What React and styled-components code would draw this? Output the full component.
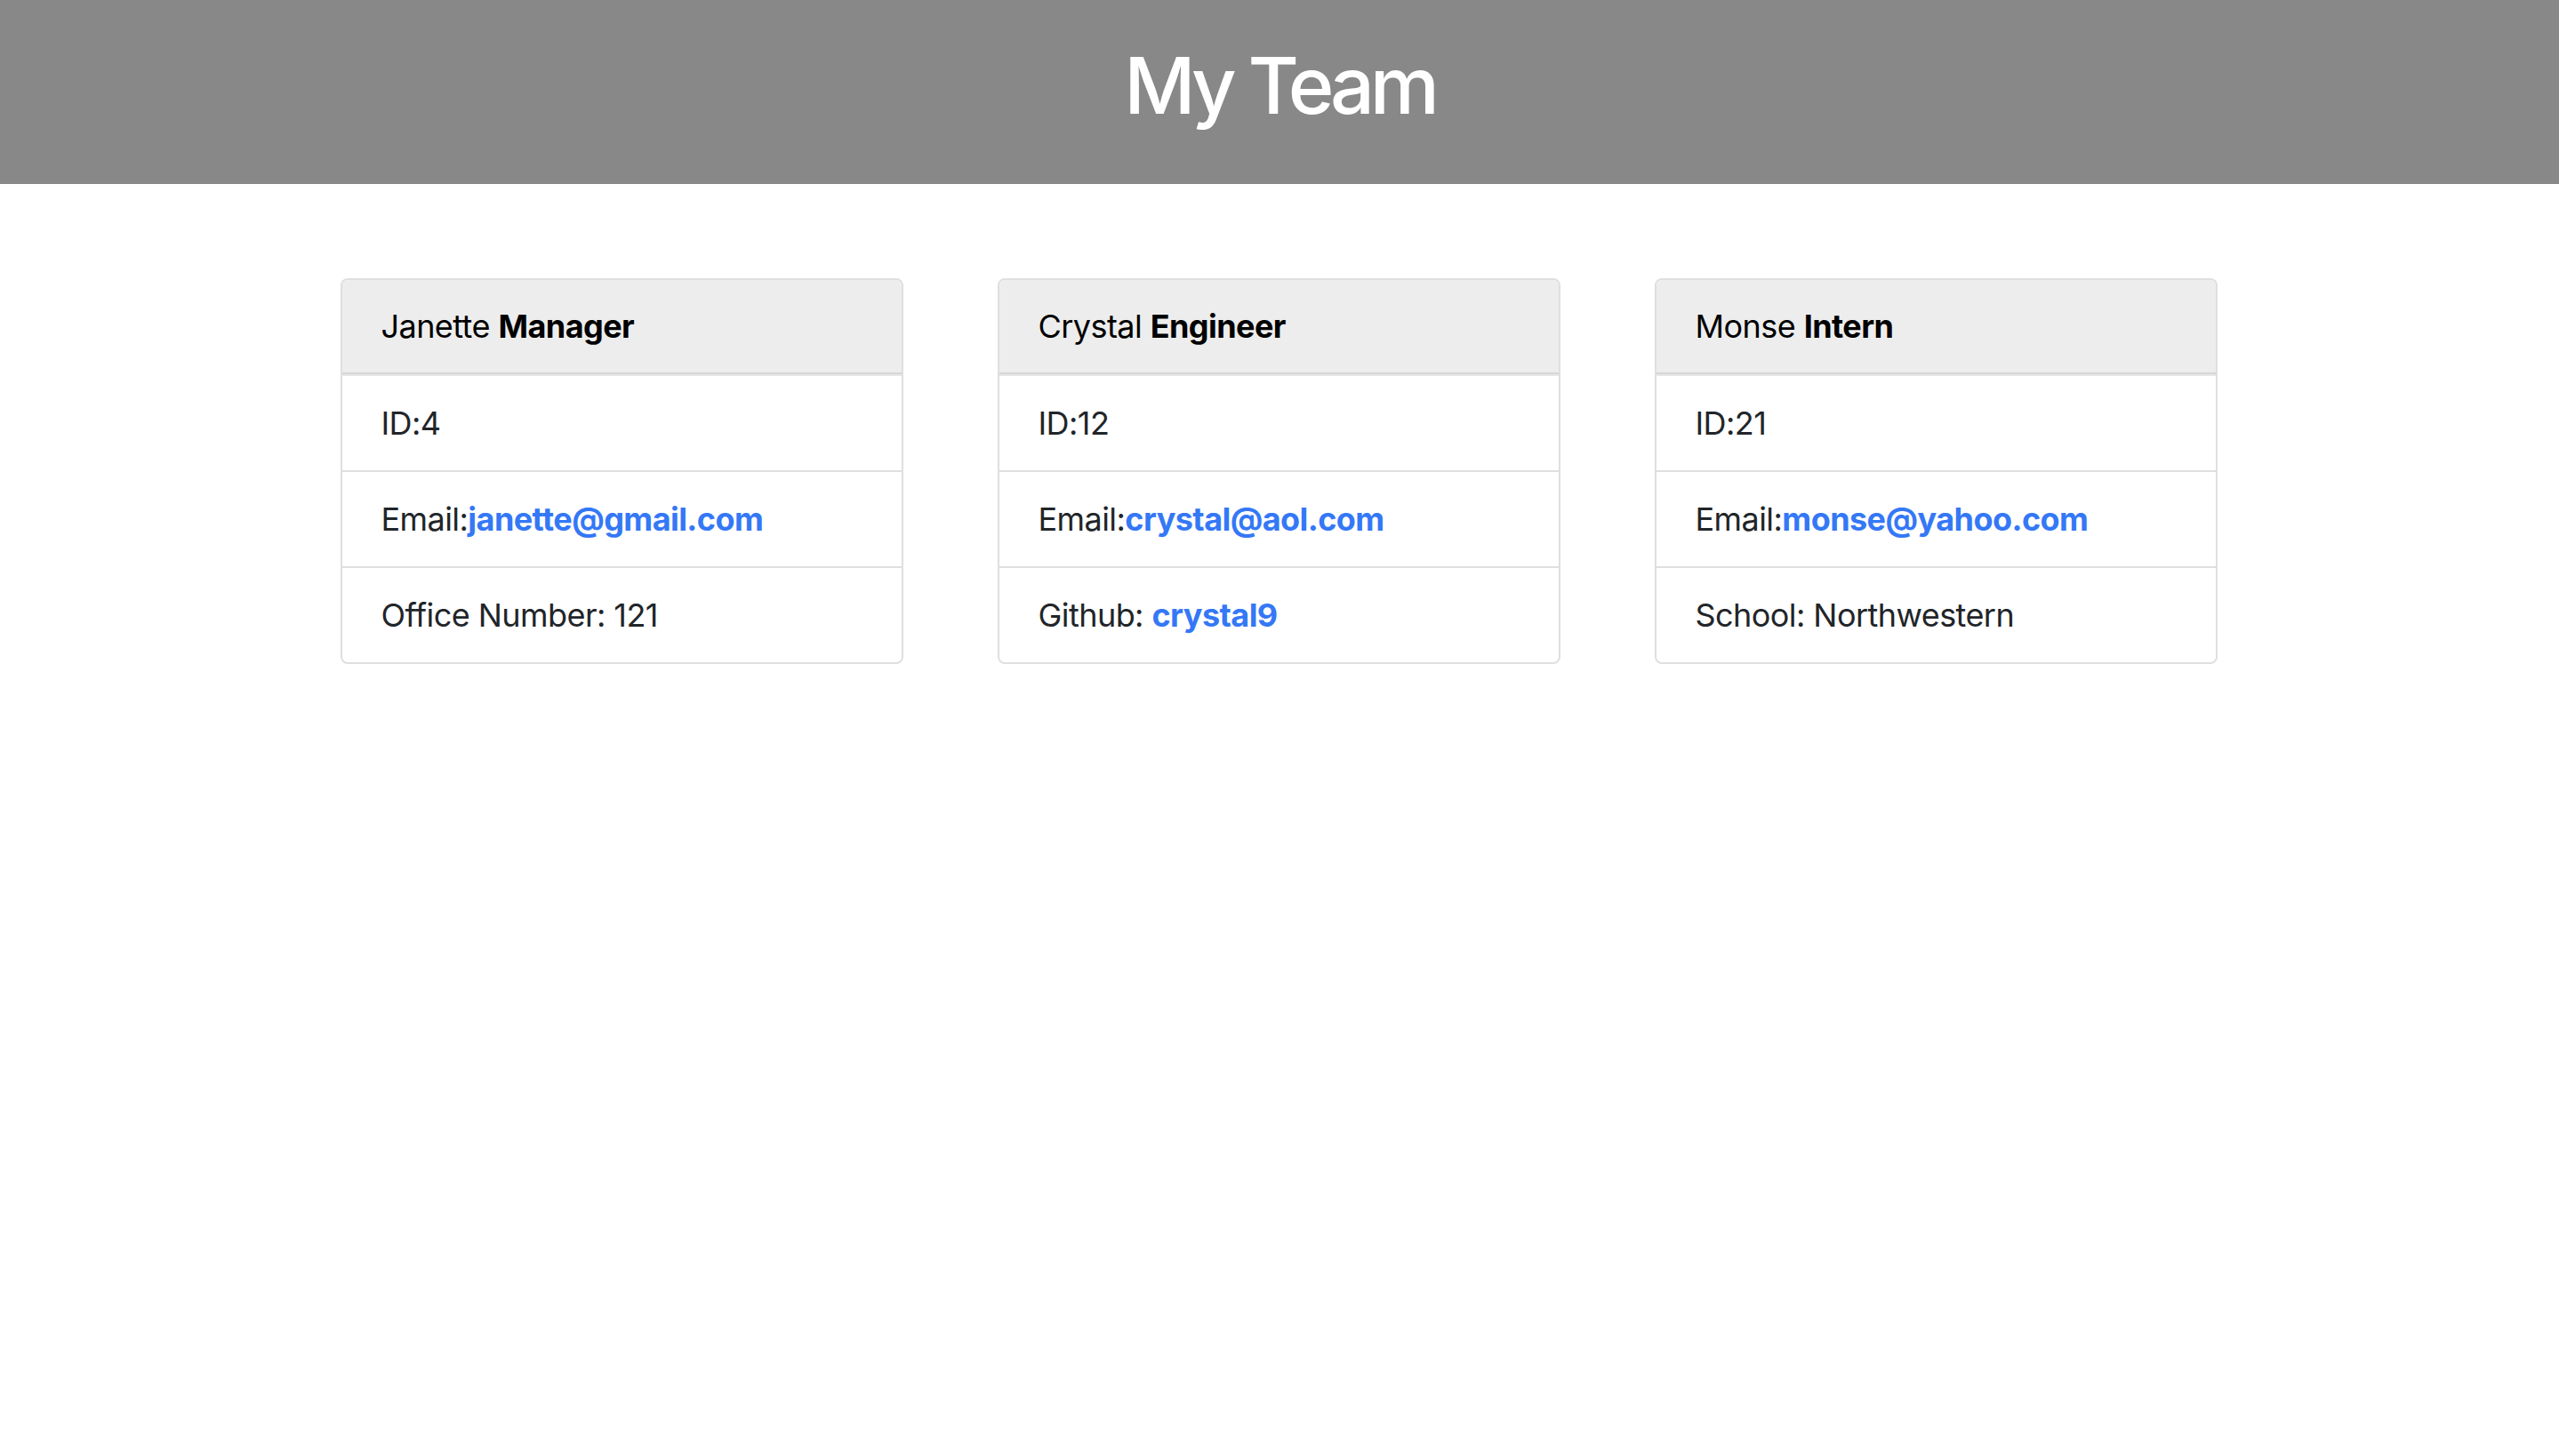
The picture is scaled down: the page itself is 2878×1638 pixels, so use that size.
import React from 'react';
import styled, { createGlobalStyle } from 'styled-components';

const GlobalStyle = createGlobalStyle`
    html, body {
        margin:0;
        padding:0;
        background:#fff;
    }
    body {
        font-family:Inter, "Noto Sans", "Liberation Sans", sans-serif;
        color:#212529;
    }
`;

const Banner = styled.header`
    height:207px;
    box-sizing:border-box;
    padding-bottom:14px;
    background-color:#888888;
    display:flex;
    align-items:center;
    justify-content:center;
`;

const Title = styled.h1`
    margin:0;
    color:#fff;
    font-size:88px;
    font-weight:500;
    line-height:1.2;
    letter-spacing:-0.06em;
`;

const Team = styled.main`
    display:flex;
    justify-content:center;
    gap:106px;
    padding-top:106px;
    padding-right:2px;
`;

const Card = styled.section`
    width:633px;
    box-sizing:border-box;
    border:2px solid #dfdfdf;
    border-radius:8px;
    overflow:hidden;
    background:#fff;
    letter-spacing:-0.035em;
`;

const CardHeader = styled.div`
    background-color:#ededed;
    border-bottom:2px solid #d6d6d6;
    padding:25px 44px;
    font-size:36px;
    line-height:54px;
    color:#000;

    b {
        font-weight:700;
    }
`;

const List = styled.ul`
    list-style:none;
    margin:0;
    padding:0;
`;

const Item = styled.li`
    padding:26px 44px;
    font-size:36px;
    line-height:54px;
    border-top:2px solid #dfdfdf;

    &:first-child{
        border-top-color:#e6e6e6;
    }
`;

const Link = styled.a`
    color:#3478f6;
    font-weight:700;
    text-decoration:none;
`;

const team = [
    {
        name:'Janette',
        role:'Manager',
        id:4,
        email:'janette@gmail.com',
        extra:<>Office Number: 121</>
    },
    {
        name:'Crystal',
        role:'Engineer',
        id:12,
        email:'crystal@aol.com',
        extra:<>Github: <Link href="#">crystal9</Link></>
    },
    {
        name:'Monse',
        role:'Intern',
        id:21,
        email:'monse@yahoo.com',
        extra:<>School: Northwestern</>
    }
];

const App = () => (
    <>
        <GlobalStyle />
        <Banner>
            <Title>My Team</Title>
        </Banner>
        <Team>
            {team.map(member => (
                <Card key={member.id}>
                    <CardHeader>{member.name} <b>{member.role}</b></CardHeader>
                    <List>
                        <Item>ID:{member.id}</Item>
                        <Item>Email:<Link href={'mailto:' + member.email}>{member.email}</Link></Item>
                        <Item>{member.extra}</Item>
                    </List>
                </Card>
            ))}
        </Team>
    </>
);

export default App;
